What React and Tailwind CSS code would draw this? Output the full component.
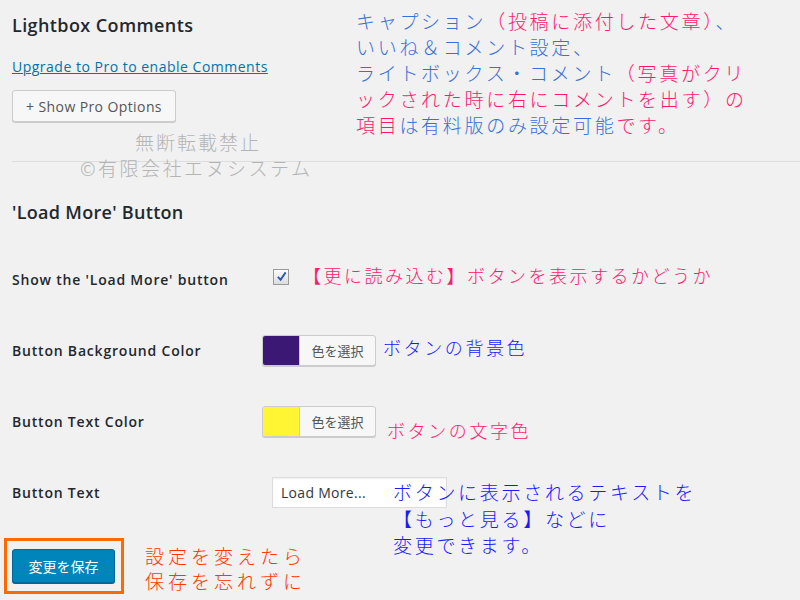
import React from 'react';

const ui = { fontFamily: '"Open Sans", "Noto Sans", "Noto Sans CJK JP", sans-serif' };
const jp = { fontFamily: '"Noto Sans CJK JP", "Noto Sans", sans-serif' };

function Row({ label, children }) {
  return (
    <div className="flex h-[71px] items-center">
      <div className="w-[250px] text-[14px] font-semibold tracking-[0.8px] text-[#23282d]">{label}</div>
      {children}
    </div>
  );
}

function ColorPicker({ color }) {
  return (
    <div className="flex h-[31px] w-[114px] overflow-hidden rounded-[3px] border border-[#ccc] bg-[#f7f7f7] shadow-[0_1px_0_#ccc]">
      <span className={`w-[37px] border-r border-[#ccc] ${color}`} />
      <span className="flex flex-1 items-center justify-center text-[13px] text-[#555]" style={jp}>
        色を選択
      </span>
    </div>
  );
}

export default function App() {
  return (
    <div className="relative h-[600px] w-[800px] overflow-hidden bg-[#f1f1f1]" style={ui}>
      <div className="pl-3 pt-[13px]">
        <h2 className="text-[18px] font-semibold leading-[24px] tracking-[0.4px] text-[#23282d]">Lightbox Comments</h2>
        <a href="#" className="mt-[20px] block w-fit text-[14px] leading-[20px] tracking-[0.5px] text-[#0073aa] underline">
          Upgrade to Pro to enable Comments
        </a>
        <button className="mt-[13px] h-[32px] w-[164px] rounded-[3px] border border-[#ccc] bg-[#f7f7f7] text-[14px] tracking-[0.4px] text-[#555] shadow-[0_1px_0_#ccc]">
          + Show Pro Options
        </button>
        <hr className="mt-[39px] border-t border-[#ddd]" />

        <h2 className="mt-[38px] text-[18px] font-semibold leading-[24px] tracking-[0.3px] text-[#23282d]">'Load More' Button</h2>

        <div className="mt-[20px]">
          <Row label="Show the 'Load More' button">
            <span className="ml-[11px] mt-[-6px] flex h-[16px] w-[16px] items-center justify-center border border-[#9a9a9a] bg-gradient-to-b from-[#fdfdfd] to-[#dcdcdc]">
              <svg width="11" height="11" viewBox="0 0 12 12">
                <path d="M2 6.5 L5 9.5 L10.5 1.5" fill="none" stroke="#2a56b8" strokeWidth="2" />
              </svg>
            </span>
          </Row>
          <Row label="Button Background Color">
            <ColorPicker color="bg-[#3a1873]" />
          </Row>
          <Row label="Button Text Color">
            <ColorPicker color="bg-[#fff533]" />
          </Row>
          <Row label="Button Text">
            <div className="ml-[10px] flex h-[31px] w-[175px] items-center border border-[#ddd] bg-white px-2 text-[14px] tracking-[0.3px] text-[#32373c] shadow-[inset_0_1px_2px_rgba(0,0,0,0.07)]">
              Load More...
            </div>
          </Row>
        </div>

        <div className="ml-[-8px] mt-[10px] flex h-[56px] w-[120px] items-center border-[3px] border-[#ff6a00] pl-[5px]">
          <button className="h-[34px] w-[103px] rounded-[3px] border border-[#006799] bg-[#0085ba] text-[14px] text-white shadow-[0_1px_0_#006799]" style={jp}>
            変更を保存
          </button>
        </div>
      </div>

      {/* 注釈 */}
      <div className="absolute left-[356px] top-[8px] text-[19px] font-light leading-[26px] tracking-[2.7px] text-[#3a6fd8]" style={jp}>
        <p>キャプション<span className="text-[#ff1a6e]">（投稿に添付した文章）</span>、</p>
        <p>いいね＆コメント設定、</p>
        <p>ライトボックス・コメント<span className="text-[#ff1a6e]">（写真がクリ</span></p>
        <p className="text-[#ff1a6e]">ックされた時に右にコメントを出す）の</p>
        <p><span className="text-[#ff1a6e]">項目</span>は有料版のみ設定可能<span className="text-[#ff1a6e]">です。</span></p>
      </div>

      <div className="absolute left-[135px] top-[129px] text-[19px] font-light leading-[26px] tracking-[2px] text-[#b4b4b4]" style={jp}>
        無断転載禁止
      </div>
      <div className="absolute left-[80px] top-[155px] text-[19px] font-light leading-[26px] tracking-[2.5px] text-[#b4b4b4]" style={jp}>
        ©有限会社エヌシステム
      </div>

      <div className="absolute left-[303px] top-[262px] text-[18px] font-light leading-[26px] tracking-[2.5px] text-[#ff1a6e]" style={jp}>
        【更に読み込む】ボタンを表示するかどうか
      </div>
      <div className="absolute left-[383px] top-[334px] text-[18px] font-light leading-[26px] tracking-[2.6px] text-[#1a1aff]" style={jp}>
        ボタンの背景色
      </div>
      <div className="absolute left-[387px] top-[417px] text-[18px] font-light leading-[26px] tracking-[2.6px] text-[#ff1a6e]" style={jp}>
        ボタンの文字色
      </div>
      <div className="absolute left-[393px] top-[479px] text-[19px] font-light leading-[26.5px] tracking-[2.7px] text-[#1a1aff]" style={jp}>
        <p>ボタンに表示されるテキストを</p>
        <p>【もっと見る】などに</p>
        <p>変更できます。</p>
      </div>
      <div className="absolute left-[145px] top-[543px] text-[19px] font-light leading-[25px] tracking-[4px] text-[#ff3a00]" style={jp}>
        <p>設定を変えたら</p>
        <p>保存を忘れずに</p>
      </div>
    </div>
  );
}
